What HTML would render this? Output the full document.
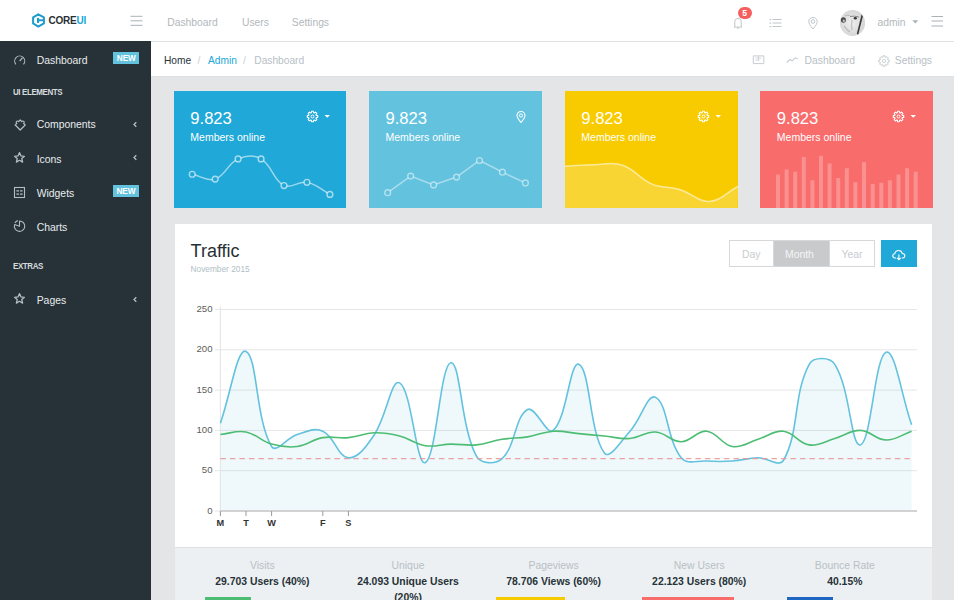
<!DOCTYPE html>
<html><head><meta charset="utf-8">
<style>
*{box-sizing:border-box;margin:0;padding:0}
html,body{width:954px;height:600px;overflow:hidden}
body{background:#e4e5e6;font-family:"Liberation Sans",sans-serif;position:relative;color:#151b1e}
.a{position:absolute}
.t{position:absolute;line-height:1;white-space:nowrap}
#hdr{left:0;top:0;width:954px;height:42px;background:#fff;border-bottom:1px solid #dde1e3}
#side{left:0;top:41px;width:151px;height:559px;background:#263238}
#bc{left:151px;top:42px;width:803px;height:34.5px;background:#fff;border-bottom:1px solid #dde1e3}
.nav{font-size:10.3px;color:#b2b8bb}
.si{font-size:10.4px;color:#e9ecee}
.sh{font-size:8.9px;font-weight:bold;color:#d5dadd;letter-spacing:-0.45px;transform:scaleX(0.9);transform-origin:0 0}
.badge{position:absolute;background:#63c2de;color:#fff;font-weight:bold;font-size:8.3px;text-align:center;line-height:13.5px;width:26px;height:12px;letter-spacing:-0.1px}
.card{position:absolute;top:91.1px;height:117.2px}
.num{font-size:16.6px;color:#fff}
.mo{font-size:10.5px;color:#fff}
#traffic{left:175px;top:224.2px;width:757.3px;height:400px;background:#fff}
#foot{left:175px;top:546.5px;width:757.3px;height:60px;background:#edf0f2;border-top:1px solid #dde1e4}
.fl{font-size:10.4px;color:#b7c0c6;text-align:center;width:146px}
.fv{font-size:10.4px;font-weight:bold;color:#263238;text-align:center;width:146px;line-height:16px}
svg text{font-family:"Liberation Sans",sans-serif}
</style></head><body>

<!-- header -->
<div id="hdr" class="a"></div>
<svg class="a" style="left:32px;top:13px" width="14" height="15" viewBox="0 0 14 15">
 <path d="M6.3,1.3 L11.9,4.4 L11.9,10.4 L6.3,13.6 L1.1,10.4 L1.1,4.4 Z" fill="none" stroke="#1f9ccb" stroke-width="2" stroke-linejoin="round"/>
 <rect x="5" y="4.9" width="2.1" height="5" fill="#1f9ccb"/>
 <rect x="5" y="6.3" width="7.5" height="1.9" fill="#1f9ccb"/>
</svg>
<div class="t" style="left:48.5px;top:16.2px;font-size:10px;font-weight:bold;color:#2a2f33;letter-spacing:-0.2px">CORE<span style="color:#20a8d8">UI</span></div>
<svg class="a" style="left:130px;top:15px" width="13" height="12" viewBox="0 0 13 12">
 <rect x="0.5" y="0.8" width="12" height="1" fill="#a9b2b7"/>
 <rect x="0.5" y="5.3" width="12" height="1" fill="#a9b2b7"/>
 <rect x="0.5" y="9.8" width="12" height="1" fill="#a9b2b7"/>
</svg>
<div class="t nav" style="left:167.3px;top:17.5px">Dashboard</div>
<div class="t nav" style="left:242px;top:17.5px">Users</div>
<div class="t nav" style="left:291.8px;top:17.5px">Settings</div>

<!-- bell -->
<svg class="a" style="left:733px;top:17px" width="10" height="12" viewBox="0 0 10 12">
 <path d="M1.8,9.3 L1.8,4.5 C1.8,2.5 3,1.5 5,1.5 C7,1.5 8.2,2.5 8.2,4.5 L8.2,9.3 L9,10.1 L1,10.1 Z" fill="none" stroke="#b9c1c6" stroke-width="0.95"/>
 <path d="M4,11.2 L6,11.2" stroke="#b9c1c6" stroke-width="0.9"/>
</svg>
<div class="a" style="left:737.5px;top:7px;width:14.2px;height:11.6px;border-radius:6px;background:#f5605f;color:#fff;font-size:8.6px;font-weight:bold;text-align:center;line-height:13px">5</div>
<!-- list -->
<svg class="a" style="left:769px;top:18px" width="14" height="10" viewBox="0 0 14 10">
 <rect x="0.5" y="1" width="1.6" height="1.2" fill="#bfc6ca"/><rect x="3.5" y="1" width="9" height="1" fill="#bfc6ca"/>
 <rect x="0.5" y="4.5" width="1.6" height="1.2" fill="#bfc6ca"/><rect x="3.5" y="4.5" width="9" height="1" fill="#bfc6ca"/>
 <rect x="0.5" y="8" width="1.6" height="1.2" fill="#bfc6ca"/><rect x="3.5" y="8" width="9" height="1" fill="#bfc6ca"/>
</svg>
<!-- pin -->
<svg class="a" style="left:807px;top:16px" width="12" height="14" viewBox="0 0 12 14">
 <path d="M6,13 C3,9.5 1.8,7.3 1.8,5.5 C1.8,3 3.7,1.5 6,1.5 C8.3,1.5 10.2,3 10.2,5.5 C10.2,7.3 9,9.5 6,13 Z" fill="none" stroke="#bfc6ca" stroke-width="1"/>
 <circle cx="6" cy="5.5" r="1.8" fill="none" stroke="#bfc6ca" stroke-width="1"/>
</svg>
<!-- avatar -->
<div class="a" style="left:839.9px;top:10.4px;width:25.2px;height:25.2px;border-radius:50%;background:radial-gradient(circle at 45% 50%,#efefef 0,#d6d6d6 70%,#b8b8b8 100%)"></div>
<svg class="a" style="left:838px;top:8px" width="30" height="30" viewBox="0 0 30 30">
 <ellipse cx="5.4" cy="12" rx="2.5" ry="2.7" fill="#4a4a4a"/>
 <ellipse cx="5.8" cy="12.7" rx="1.1" ry="1.2" fill="#c8c8c8"/>
 <ellipse cx="17.3" cy="10.2" rx="1.6" ry="1.3" fill="#333"/>
 <path d="M12,8.5 Q16,7.5 21,9" stroke="#888" stroke-width="1" fill="none"/>
 <path d="M23.6,6.2 L24.8,8.6 L20.3,26.5 L18.8,26" fill="#3a3a3a"/>
 <path d="M7,8 Q10,6.5 12,7.5" stroke="#aaa" stroke-width="0.8" fill="none"/>
 <path d="M6,18 Q9,22 12,24" stroke="#b5b5b5" stroke-width="1.2" fill="none"/>
 <path d="M14,12 Q13,17 14,22" stroke="#c5c5c5" stroke-width="1.5" fill="none"/>
</svg>
<div class="t nav" style="left:877.5px;top:17.8px">admin</div>
<svg class="a" style="left:912px;top:20px" width="7" height="4" viewBox="0 0 7 4"><path d="M0.3,0.3 L6.3,0.3 L3.3,3.5 Z" fill="#a9b2b7"/></svg>
<svg class="a" style="left:931px;top:15px" width="13" height="13" viewBox="0 0 13 13">
 <rect x="0.5" y="1" width="11.5" height="1" fill="#a9b2b7"/>
 <rect x="0.5" y="5.5" width="11.5" height="1" fill="#a9b2b7"/>
 <rect x="0.5" y="10.5" width="11.5" height="1" fill="#a9b2b7"/>
</svg>

<!-- sidebar -->
<div id="side" class="a"></div>
<svg class="a" style="left:13px;top:54px" width="14" height="12" viewBox="0 0 14 12">
 <path d="M2.9,10.3 A5,5 0 1 1 10.5,10.3" fill="none" stroke="#b3bcc1" stroke-width="1.1"/>
 <path d="M6.7,7 L9.4,3.9" stroke="#b3bcc1" stroke-width="1.2"/>
</svg>
<div class="t si" style="left:36.7px;top:55.8px">Dashboard</div>
<div class="badge" style="left:113.3px;top:51.8px">NEW</div>
<div class="t sh" style="left:12.5px;top:87.6px">UI ELEMENTS</div>

<svg class="a" style="left:13.5px;top:117.5px" width="13" height="13" viewBox="0 0 13 13">
 <path d="M1.2,7 L2.8,5.4 A1.3,1.3 0 1 1 4.6,3.6 L6.2,2 L7.8,3.6 A1.3,1.3 0 1 1 9.6,5.4 L11.2,7 L6.2,12 Z" fill="none" stroke="#b3bcc1" stroke-width="1.2" stroke-linejoin="round"/>
</svg>
<div class="t si" style="left:36.7px;top:120.2px">Components</div>
<svg class="a" style="left:131.5px;top:120.5px" width="6" height="7" viewBox="0 0 6 7"><path d="M4.3,1.2 L2,3.5 L4.3,5.8" fill="none" stroke="#b3bcc1" stroke-width="1.3"/></svg>

<svg class="a" style="left:13.3px;top:151px" width="13" height="13" viewBox="0 0 13 13">
 <path d="M6.5,1.6 L8,4.9 L11.4,5.3 L8.8,7.6 L9.6,11.1 L6.5,9.3 L3.4,11.1 L4.2,7.6 L1.6,5.3 L5,4.9 Z" fill="none" stroke="#b3bcc1" stroke-width="1.3" stroke-linejoin="round"/>
</svg>
<div class="t si" style="left:36.7px;top:154.5px">Icons</div>
<svg class="a" style="left:131.5px;top:154.3px" width="6" height="7" viewBox="0 0 6 7"><path d="M4.3,1.2 L2,3.5 L4.3,5.8" fill="none" stroke="#b3bcc1" stroke-width="1.3"/></svg>

<svg class="a" style="left:13px;top:186px" width="13" height="13" viewBox="0 0 13 13">
 <rect x="1.5" y="1.5" width="10" height="10" fill="none" stroke="#b3bcc1" stroke-width="1.1"/>
 <path d="M3.4,4.9 L6,4.9 M7,4.9 L9.6,4.9 M3.4,8.1 L6,8.1 M7,8.1 L9.6,8.1" stroke="#b3bcc1" stroke-width="1.3"/>
</svg>
<div class="t si" style="left:36.7px;top:188.5px">Widgets</div>
<div class="badge" style="left:113px;top:184.8px">NEW</div>

<svg class="a" style="left:13px;top:219px" width="13" height="14" viewBox="0 0 13 14">
 <path d="M6.5,2 A5.2,5.2 0 1 1 1.6,5.6 L6.5,7.2 Z" fill="none" stroke="#b3bcc1" stroke-width="1.1" stroke-linejoin="round"/>
 <path d="M4.8,1.6 A5,5 0 0 0 1.9,3.9" fill="none" stroke="#b3bcc1" stroke-width="1.1"/>
</svg>
<div class="t si" style="left:36.7px;top:222.6px">Charts</div>
<div class="t sh" style="left:12.5px;top:261.5px">EXTRAS</div>

<svg class="a" style="left:13px;top:292px" width="13" height="13" viewBox="0 0 13 13">
 <path d="M6.5,1.6 L8,4.9 L11.4,5.3 L8.8,7.6 L9.6,11.1 L6.5,9.3 L3.4,11.1 L4.2,7.6 L1.6,5.3 L5,4.9 Z" fill="none" stroke="#b3bcc1" stroke-width="1.3" stroke-linejoin="round"/>
</svg>
<div class="t si" style="left:36.7px;top:295.7px">Pages</div>
<svg class="a" style="left:131.5px;top:295.5px" width="6" height="7" viewBox="0 0 6 7"><path d="M4.3,1.2 L2,3.5 L4.3,5.8" fill="none" stroke="#b3bcc1" stroke-width="1.3"/></svg>

<!-- breadcrumb -->
<div id="bc" class="a"></div>
<div class="t" style="left:163.9px;top:56px;font-size:10.2px;color:#263238">Home</div>
<div class="t" style="left:197.5px;top:56px;font-size:10.2px;color:#c9d0d4">/</div>
<div class="t" style="left:208px;top:56px;font-size:10.2px;color:#20a8d8">Admin</div>
<div class="t" style="left:243px;top:56px;font-size:10.2px;color:#c9d0d4">/</div>
<div class="t" style="left:254.3px;top:56px;font-size:10.2px;color:#b7c0c6">Dashboard</div>

<svg class="a" style="left:752px;top:55px" width="13" height="10" viewBox="0 0 13 10">
 <path d="M1.3,0.9 L11.8,0.9 L11.8,8.6 L1.3,8.6 Z" fill="none" stroke="#c6cdd1" stroke-width="1"/>
 <path d="M3.5,3 L9.5,3 M3.5,5.2 L7.5,5.2 M6.5,1 L6.5,5.5" stroke="#c6cdd1" stroke-width="0.8"/>
</svg>
<svg class="a" style="left:786px;top:56px" width="13" height="8" viewBox="0 0 13 8">
 <path d="M0.8,6.5 L3.8,3.5 L6.2,4.8 L9.2,1.8 L11.8,2.8" fill="none" stroke="#c6cdd1" stroke-width="1.1"/>
</svg>
<div class="t" style="left:804.6px;top:56px;font-size:10.3px;color:#b7c0c6">Dashboard</div>
<svg class="a" style="left:877.5px;top:55px" width="12" height="12" viewBox="0 0 12 12">
 <g transform="translate(-0.5,-0.5)"><path d="M10.23,5.35 L11.72,5.57 L11.72,7.43 L10.23,7.65 L9.95,8.32 L10.85,9.53 L9.53,10.85 L8.32,9.95 L7.65,10.23 L7.43,11.72 L5.57,11.72 L5.35,10.23 L4.68,9.95 L3.47,10.85 L2.15,9.53 L3.05,8.32 L2.77,7.65 L1.28,7.43 L1.28,5.57 L2.77,5.35 L3.05,4.68 L2.15,3.47 L3.47,2.15 L4.68,3.05 L5.35,2.77 L5.57,1.28 L7.43,1.28 L7.65,2.77 L8.32,3.05 L9.53,2.15 L10.85,3.47 L9.95,4.68 Z" fill="none" stroke="#c6cdd1" stroke-width="1" stroke-linejoin="round"/>
 <circle cx="6.5" cy="6.5" r="1.6" fill="none" stroke="#c6cdd1" stroke-width="0.9"/></g>
</svg>
<div class="t" style="left:894.8px;top:56px;font-size:10.3px;color:#b7c0c6">Settings</div>

<!-- cards -->
<div class="card" style="width:172.2px;left:173.9px;background:#20a8d8"></div>
<div class="card" style="width:173.6px;left:368.8px;background:#63c2de"></div>
<div class="card" style="width:172.5px;left:565px;background:#f8cb00"></div>
<div class="card" style="width:173px;left:760.4px;background:#f86c6b"></div>

<svg class="a" style="left:0;top:0" width="954" height="600" viewBox="0 0 954 600">
 <path d="M565.10,166.29 C576.62,165.65 582.37,164.90 593.90,164.69 C605.41,164.48 612.18,161.73 622.70,165.22 C635.22,169.39 639.09,178.57 651.50,183.84 C662.13,188.36 669.10,186.28 680.30,189.70 C692.14,193.31 697.82,202.02 709.10,201.40 C720.86,200.75 726.38,192.46 737.90,186.50 L737.5,208.3 L565,208.3 Z" fill="rgba(255,255,255,0.2)"/>
 <path d="M565.10,166.29 C576.62,165.65 582.37,164.90 593.90,164.69 C605.41,164.48 612.18,161.73 622.70,165.22 C635.22,169.39 639.09,178.57 651.50,183.84 C662.13,188.36 669.10,186.28 680.30,189.70 C692.14,193.31 697.82,202.02 709.10,201.40 C720.86,200.75 726.38,192.46 737.90,186.50" fill="none" stroke="rgba(255,255,255,0.55)" stroke-width="1.5"/>
 <path d="M192.20,174.23 C201.38,176.17 207.18,181.74 215.15,179.08 C225.54,175.61 227.61,163.51 238.10,158.90 C245.97,155.44 253.80,154.69 261.05,158.90 C272.16,165.35 272.93,179.89 284.00,185.53 C291.29,189.25 298.29,180.63 306.95,182.30 C316.65,184.18 320.72,189.57 329.90,194.41" fill="none" stroke="rgba(255,255,255,0.55)" stroke-width="1.5"/>
 <circle cx="192.20" cy="174.23" r="2.9" fill="#20a8d8" stroke="rgba(255,255,255,.6)" stroke-width="1.4"/><circle cx="215.15" cy="179.08" r="2.9" fill="#20a8d8" stroke="rgba(255,255,255,.6)" stroke-width="1.4"/><circle cx="238.10" cy="158.90" r="2.9" fill="#20a8d8" stroke="rgba(255,255,255,.6)" stroke-width="1.4"/><circle cx="261.05" cy="158.90" r="2.9" fill="#20a8d8" stroke="rgba(255,255,255,.6)" stroke-width="1.4"/><circle cx="284.00" cy="185.53" r="2.9" fill="#20a8d8" stroke="rgba(255,255,255,.6)" stroke-width="1.4"/><circle cx="306.95" cy="182.30" r="2.9" fill="#20a8d8" stroke="rgba(255,255,255,.6)" stroke-width="1.4"/><circle cx="329.90" cy="194.41" r="2.9" fill="#20a8d8" stroke="rgba(255,255,255,.6)" stroke-width="1.4"/>
 <path d="M387.7,192.7 L410.65,176.11 L433.6,184.89 L456.55,177.08 L479.5,160.49 L502.45,172.2 L525.4,182.94" fill="none" stroke="rgba(255,255,255,0.45)" stroke-width="1.5"/>
 <circle cx="387.70" cy="192.70" r="2.9" fill="#63c2de" stroke="rgba(255,255,255,.5)" stroke-width="1.4"/><circle cx="410.65" cy="176.11" r="2.9" fill="#63c2de" stroke="rgba(255,255,255,.5)" stroke-width="1.4"/><circle cx="433.60" cy="184.89" r="2.9" fill="#63c2de" stroke="rgba(255,255,255,.5)" stroke-width="1.4"/><circle cx="456.55" cy="177.08" r="2.9" fill="#63c2de" stroke="rgba(255,255,255,.5)" stroke-width="1.4"/><circle cx="479.50" cy="160.49" r="2.9" fill="#63c2de" stroke="rgba(255,255,255,.5)" stroke-width="1.4"/><circle cx="502.45" cy="172.20" r="2.9" fill="#63c2de" stroke="rgba(255,255,255,.5)" stroke-width="1.4"/><circle cx="525.40" cy="182.94" r="2.9" fill="#63c2de" stroke="rgba(255,255,255,.5)" stroke-width="1.4"/>
 <rect x="776.0" y="174.5" width="4" height="33.5" fill="rgba(255,255,255,0.25)"/>
<rect x="784.6" y="169.4" width="4" height="38.6" fill="rgba(255,255,255,0.25)"/>
<rect x="793.2" y="171.7" width="4" height="36.3" fill="rgba(255,255,255,0.25)"/>
<rect x="801.8" y="157" width="4" height="51.0" fill="rgba(255,255,255,0.25)"/>
<rect x="810.4" y="180.3" width="4" height="27.7" fill="rgba(255,255,255,0.25)"/>
<rect x="819.0" y="155.8" width="4" height="52.2" fill="rgba(255,255,255,0.25)"/>
<rect x="827.6" y="163.5" width="4" height="44.5" fill="rgba(255,255,255,0.25)"/>
<rect x="836.2" y="178" width="4" height="30.0" fill="rgba(255,255,255,0.25)"/>
<rect x="844.8" y="168.2" width="4" height="39.8" fill="rgba(255,255,255,0.25)"/>
<rect x="853.4" y="182.2" width="4" height="25.8" fill="rgba(255,255,255,0.25)"/>
<rect x="862.0" y="162.1" width="4" height="45.9" fill="rgba(255,255,255,0.25)"/>
<rect x="870.7" y="183.9" width="4" height="24.1" fill="rgba(255,255,255,0.25)"/>
<rect x="879.3" y="182.7" width="4" height="25.3" fill="rgba(255,255,255,0.25)"/>
<rect x="887.9" y="180.3" width="4" height="27.7" fill="rgba(255,255,255,0.25)"/>
<rect x="896.5" y="174.5" width="4" height="33.5" fill="rgba(255,255,255,0.25)"/>
<rect x="905.1" y="168.2" width="4" height="39.8" fill="rgba(255,255,255,0.25)"/>
<rect x="913.7" y="171.7" width="4" height="36.3" fill="rgba(255,255,255,0.25)"/>
</svg>

<div class="t num" style="left:190.3px;top:111.2px">9.823</div>
<div class="t mo" style="left:190.3px;top:132.1px">Members online</div>
<div class="t num" style="left:385.5px;top:111.2px">9.823</div>
<div class="t mo" style="left:385.5px;top:132.1px">Members online</div>
<div class="t num" style="left:581.3px;top:111.2px">9.823</div>
<div class="t mo" style="left:581.3px;top:132.1px">Members online</div>
<div class="t num" style="left:776.8px;top:111.2px">9.823</div>
<div class="t mo" style="left:776.8px;top:132.1px">Members online</div>

<!-- gear icons -->
<svg class="a" style="left:306px;top:110px" width="26" height="13" viewBox="0 0 26 13">
 <path d="M10.23,5.35 L11.72,5.57 L11.72,7.43 L10.23,7.65 L9.95,8.32 L10.85,9.53 L9.53,10.85 L8.32,9.95 L7.65,10.23 L7.43,11.72 L5.57,11.72 L5.35,10.23 L4.68,9.95 L3.47,10.85 L2.15,9.53 L3.05,8.32 L2.77,7.65 L1.28,7.43 L1.28,5.57 L2.77,5.35 L3.05,4.68 L2.15,3.47 L3.47,2.15 L4.68,3.05 L5.35,2.77 L5.57,1.28 L7.43,1.28 L7.65,2.77 L8.32,3.05 L9.53,2.15 L10.85,3.47 L9.95,4.68 Z" fill="none" stroke="#fff" stroke-width="1.1" stroke-linejoin="round"/>
 <circle cx="6.5" cy="6.5" r="1.5" fill="none" stroke="#fff" stroke-width="1"/>
 <path d="M18.5,5 L24,5 L21.25,7.8 Z" fill="#fff"/>
</svg>
<svg class="a" style="left:515px;top:110px" width="12" height="14" viewBox="0 0 12 14">
 <path d="M6,12.5 C3.5,9.5 2,7.3 2,5.5 C2,3.2 3.8,1.5 6,1.5 C8.2,1.5 10,3.2 10,5.5 C10,7.3 8.5,9.5 6,12.5 Z" fill="none" stroke="#fff" stroke-width="1.1"/>
 <circle cx="6" cy="5.5" r="1.6" fill="none" stroke="#fff" stroke-width="1"/>
</svg>
<svg class="a" style="left:697px;top:110px" width="26" height="13" viewBox="0 0 26 13">
 <path d="M10.23,5.35 L11.72,5.57 L11.72,7.43 L10.23,7.65 L9.95,8.32 L10.85,9.53 L9.53,10.85 L8.32,9.95 L7.65,10.23 L7.43,11.72 L5.57,11.72 L5.35,10.23 L4.68,9.95 L3.47,10.85 L2.15,9.53 L3.05,8.32 L2.77,7.65 L1.28,7.43 L1.28,5.57 L2.77,5.35 L3.05,4.68 L2.15,3.47 L3.47,2.15 L4.68,3.05 L5.35,2.77 L5.57,1.28 L7.43,1.28 L7.65,2.77 L8.32,3.05 L9.53,2.15 L10.85,3.47 L9.95,4.68 Z" fill="none" stroke="#fff" stroke-width="1.1" stroke-linejoin="round"/>
 <circle cx="6.5" cy="6.5" r="1.5" fill="none" stroke="#fff" stroke-width="1"/>
 <path d="M18.5,5 L24,5 L21.25,7.8 Z" fill="#fff"/>
</svg>
<svg class="a" style="left:892px;top:110px" width="26" height="13" viewBox="0 0 26 13">
 <path d="M10.23,5.35 L11.72,5.57 L11.72,7.43 L10.23,7.65 L9.95,8.32 L10.85,9.53 L9.53,10.85 L8.32,9.95 L7.65,10.23 L7.43,11.72 L5.57,11.72 L5.35,10.23 L4.68,9.95 L3.47,10.85 L2.15,9.53 L3.05,8.32 L2.77,7.65 L1.28,7.43 L1.28,5.57 L2.77,5.35 L3.05,4.68 L2.15,3.47 L3.47,2.15 L4.68,3.05 L5.35,2.77 L5.57,1.28 L7.43,1.28 L7.65,2.77 L8.32,3.05 L9.53,2.15 L10.85,3.47 L9.95,4.68 Z" fill="none" stroke="#fff" stroke-width="1.1" stroke-linejoin="round"/>
 <circle cx="6.5" cy="6.5" r="1.5" fill="none" stroke="#fff" stroke-width="1"/>
 <path d="M18.5,5 L24,5 L21.25,7.8 Z" fill="#fff"/>
</svg>

<!-- traffic card -->
<div id="traffic" class="a"></div>
<div class="t" style="left:190.6px;top:242.3px;font-size:18px;color:#283036">Traffic</div>
<div class="t" style="left:190.6px;top:265.4px;font-size:8.3px;color:#b0bec5">November 2015</div>

<div class="a" style="left:728.8px;top:239.9px;width:146px;height:27px;border:1px solid #d6d9dc;background:#fff"></div>
<div class="a" style="left:772.8px;top:240.9px;width:56.2px;height:25px;background:#c9cacb"></div>
<div class="a" style="left:772.5px;top:240px;width:1px;height:26.5px;background:#d6d9dc"></div>
<div class="a" style="left:828.8px;top:240px;width:1px;height:26.5px;background:#d6d9dc"></div>
<div class="t" style="left:742px;top:250px;font-size:10.4px;color:#c8ccd0">Day</div>
<div class="t" style="left:785px;top:250px;font-size:10.4px;color:#f4f5f6">Month</div>
<div class="t" style="left:841.5px;top:250px;font-size:10.4px;color:#c8ccd0">Year</div>
<div class="a" style="left:881.1px;top:239.9px;width:36px;height:27px;background:#20a8d8"></div>
<svg class="a" style="left:892px;top:249px" width="14" height="12" viewBox="0 0 14 12">
 <path d="M4,9 L3,9 C1.6,9 0.8,8 0.8,6.8 C0.8,5.6 1.7,4.8 2.8,4.8 C3.1,2.8 4.6,1.5 6.6,1.5 C8.5,1.5 9.9,2.8 10.2,4.5 C11.6,4.5 12.8,5.5 12.8,6.8 C12.8,8 11.9,9 10.6,9 L9.8,9" fill="none" stroke="#fff" stroke-width="1.1"/>
 <path d="M6.9,5.5 L6.9,10.5 M5,8.8 L6.9,10.8 L8.8,8.8" fill="none" stroke="#fff" stroke-width="1.1"/>
</svg>

<svg class="a" style="left:0;top:0" width="954" height="600" viewBox="0 0 954 600">
<line x1="215" y1="511.0" x2="917" y2="511.0" stroke="#e6e6e6" stroke-width="1"/>
<text x="212.5" y="513.6" text-anchor="end" font-size="9.6" fill="#5c5c5c">0</text>
<line x1="215" y1="470.7" x2="917" y2="470.7" stroke="#e6e6e6" stroke-width="1"/>
<text x="212.5" y="473.3" text-anchor="end" font-size="9.6" fill="#5c5c5c">50</text>
<line x1="215" y1="430.4" x2="917" y2="430.4" stroke="#e6e6e6" stroke-width="1"/>
<text x="212.5" y="433.0" text-anchor="end" font-size="9.6" fill="#5c5c5c">100</text>
<line x1="215" y1="390.1" x2="917" y2="390.1" stroke="#e6e6e6" stroke-width="1"/>
<text x="212.5" y="392.7" text-anchor="end" font-size="9.6" fill="#5c5c5c">150</text>
<line x1="215" y1="349.8" x2="917" y2="349.8" stroke="#e6e6e6" stroke-width="1"/>
<text x="212.5" y="352.4" text-anchor="end" font-size="9.6" fill="#5c5c5c">200</text>
<line x1="215" y1="309.5" x2="917" y2="309.5" stroke="#e6e6e6" stroke-width="1"/>
<text x="212.5" y="312.1" text-anchor="end" font-size="9.6" fill="#5c5c5c">250</text>
<line x1="220.4" y1="306.5" x2="220.4" y2="516" stroke="#e6e6e6" stroke-width="1"/>
<path d="M220.40,423.15 C230.64,394.45 237.07,347.33 246.00,351.41 C257.55,356.68 255.69,420.73 271.60,446.52 C276.17,453.93 286.49,437.63 297.20,434.43 C306.97,431.51 314.37,427.36 322.80,431.21 C334.85,436.71 337.76,456.97 348.40,457.80 C358.24,458.58 366.44,446.31 374.00,435.24 C386.92,416.32 391.20,378.35 399.60,382.85 C411.68,389.31 416.02,466.25 425.20,462.64 C436.50,458.19 440.24,364.03 450.80,362.70 C460.72,361.45 460.21,425.87 476.40,456.19 C480.69,464.24 495.51,464.54 502.00,458.61 C515.99,445.84 514.77,416.51 527.60,409.44 C535.25,405.23 546.68,436.15 553.20,430.40 C567.16,418.09 569.90,360.39 578.80,364.31 C590.38,369.41 589.39,433.35 604.40,452.97 C609.87,460.11 620.95,441.04 630.00,431.21 C641.43,418.79 647.56,393.18 655.60,397.35 C668.04,403.82 666.50,439.52 681.20,457.80 C686.98,464.99 696.52,460.38 706.80,461.03 C717.00,461.67 722.20,461.67 732.40,461.03 C742.68,460.38 747.74,457.97 758.00,457.80 C768.22,457.64 779.39,467.92 783.60,460.22 C799.87,430.52 792.92,394.81 809.20,364.31 C813.40,356.44 830.04,356.82 834.80,364.31 C850.52,389.06 850.82,447.17 860.40,444.91 C871.30,442.33 874.62,356.70 886.00,352.22 C895.10,348.64 901.36,395.74 911.60,424.76 L911.60,511 L220.40,511 Z" fill="rgba(99,194,222,0.1)"/>
<line x1="220.4" y1="306.5" x2="220.4" y2="511" stroke="#e6e6e6" stroke-width="1"/>
<path d="M220.40,423.15 C230.64,394.45 237.07,347.33 246.00,351.41 C257.55,356.68 255.69,420.73 271.60,446.52 C276.17,453.93 286.49,437.63 297.20,434.43 C306.97,431.51 314.37,427.36 322.80,431.21 C334.85,436.71 337.76,456.97 348.40,457.80 C358.24,458.58 366.44,446.31 374.00,435.24 C386.92,416.32 391.20,378.35 399.60,382.85 C411.68,389.31 416.02,466.25 425.20,462.64 C436.50,458.19 440.24,364.03 450.80,362.70 C460.72,361.45 460.21,425.87 476.40,456.19 C480.69,464.24 495.51,464.54 502.00,458.61 C515.99,445.84 514.77,416.51 527.60,409.44 C535.25,405.23 546.68,436.15 553.20,430.40 C567.16,418.09 569.90,360.39 578.80,364.31 C590.38,369.41 589.39,433.35 604.40,452.97 C609.87,460.11 620.95,441.04 630.00,431.21 C641.43,418.79 647.56,393.18 655.60,397.35 C668.04,403.82 666.50,439.52 681.20,457.80 C686.98,464.99 696.52,460.38 706.80,461.03 C717.00,461.67 722.20,461.67 732.40,461.03 C742.68,460.38 747.74,457.97 758.00,457.80 C768.22,457.64 779.39,467.92 783.60,460.22 C799.87,430.52 792.92,394.81 809.20,364.31 C813.40,356.44 830.04,356.82 834.80,364.31 C850.52,389.06 850.82,447.17 860.40,444.91 C871.30,442.33 874.62,356.70 886.00,352.22 C895.10,348.64 901.36,395.74 911.60,424.76" fill="none" stroke="#63c2de" stroke-width="1.6"/>
<path d="M220.40,434.43 C230.64,433.46 236.25,430.17 246.00,432.01 C256.73,434.04 260.87,441.06 271.60,444.10 C281.35,446.86 287.23,447.78 297.20,446.52 C307.71,445.20 312.27,439.48 322.80,437.65 C332.75,435.93 338.25,438.61 348.40,437.65 C358.73,436.68 363.71,433.14 374.00,432.82 C384.19,432.50 389.66,433.54 399.60,436.04 C410.14,438.70 414.63,444.05 425.20,445.71 C435.11,447.27 440.55,444.26 450.80,444.10 C461.03,443.94 466.28,445.86 476.40,444.91 C486.76,443.93 491.66,440.89 502.00,439.27 C512.14,437.67 517.46,438.44 527.60,436.85 C537.94,435.22 542.86,431.86 553.20,431.21 C563.34,430.57 568.56,432.66 578.80,433.62 C589.04,434.59 594.16,435.07 604.40,436.04 C614.64,437.01 619.89,439.26 630.00,438.46 C640.37,437.64 645.54,431.38 655.60,432.01 C666.02,432.67 671.01,441.84 681.20,441.68 C691.49,441.52 696.95,430.28 706.80,431.21 C717.43,432.21 721.58,444.82 732.40,446.52 C742.06,448.04 747.80,442.32 758.00,439.27 C768.28,436.19 773.76,430.12 783.60,431.21 C794.24,432.38 798.47,443.39 809.20,444.91 C818.95,446.29 824.64,441.34 834.80,438.46 C845.12,435.53 850.26,430.08 860.40,430.40 C870.74,430.73 875.71,439.91 886.00,440.07 C896.19,440.23 901.36,434.75 911.60,431.21" fill="none" stroke="#4dbd74" stroke-width="1.6"/>
<line x1="220.4" y1="458.6" x2="912" y2="458.6" stroke="#e99597" stroke-width="1.3" stroke-dasharray="5.5 4" opacity="0.85"/>
<line x1="220.4" y1="511" x2="917" y2="511" stroke="#c8c8c8" stroke-width="1.4"/>
<line x1="220.4" y1="511" x2="220.4" y2="516" stroke="#999" stroke-width="1"/>
<text x="220.4" y="525.6" text-anchor="middle" font-size="9.2" font-weight="bold" fill="#333">M</text>
<line x1="246.0" y1="511" x2="246.0" y2="516" stroke="#999" stroke-width="1"/>
<text x="246.0" y="525.6" text-anchor="middle" font-size="9.2" font-weight="bold" fill="#333">T</text>
<line x1="271.6" y1="511" x2="271.6" y2="516" stroke="#999" stroke-width="1"/>
<text x="271.6" y="525.6" text-anchor="middle" font-size="9.2" font-weight="bold" fill="#333">W</text>
<line x1="322.8" y1="511" x2="322.8" y2="516" stroke="#999" stroke-width="1"/>
<text x="322.8" y="525.6" text-anchor="middle" font-size="9.2" font-weight="bold" fill="#333">F</text>
<line x1="348.4" y1="511" x2="348.4" y2="516" stroke="#999" stroke-width="1"/>
<text x="348.4" y="525.6" text-anchor="middle" font-size="9.2" font-weight="bold" fill="#333">S</text>
</svg>

<div id="foot" class="a"></div>
<div class="t fl" style="left:189.4px;top:561px">Visits</div>
<div class="t fv" style="left:189.4px;top:574px">29.703 Users (40%)</div>
<div class="a" style="left:204.6px;top:597.3px;width:46.2px;height:5px;background:#4dbd74"></div>
<div class="t fl" style="left:335px;top:561px">Unique</div>
<div class="a fv" style="left:335px;top:574px;white-space:normal;line-height:16px;width:146px;padding:0 10px">24.093 Unique Users (20%)</div>
<div class="t fl" style="left:480.6px;top:561px">Pageviews</div>
<div class="t fv" style="left:480.6px;top:574px">78.706 Views (60%)</div>
<div class="a" style="left:496px;top:597.3px;width:69.4px;height:5px;background:#f8cb00"></div>
<div class="t fl" style="left:626.2px;top:561px">New Users</div>
<div class="t fv" style="left:626.2px;top:574px">22.123 Users (80%)</div>
<div class="a" style="left:641.6px;top:597.3px;width:92.5px;height:5px;background:#f86c6b"></div>
<div class="t fl" style="left:771.8px;top:561px">Bounce Rate</div>
<div class="t fv" style="left:771.8px;top:574px">40.15%</div>
<div class="a" style="left:787.2px;top:597.3px;width:46.2px;height:5px;background:#1d66c2"></div>

</body></html>
